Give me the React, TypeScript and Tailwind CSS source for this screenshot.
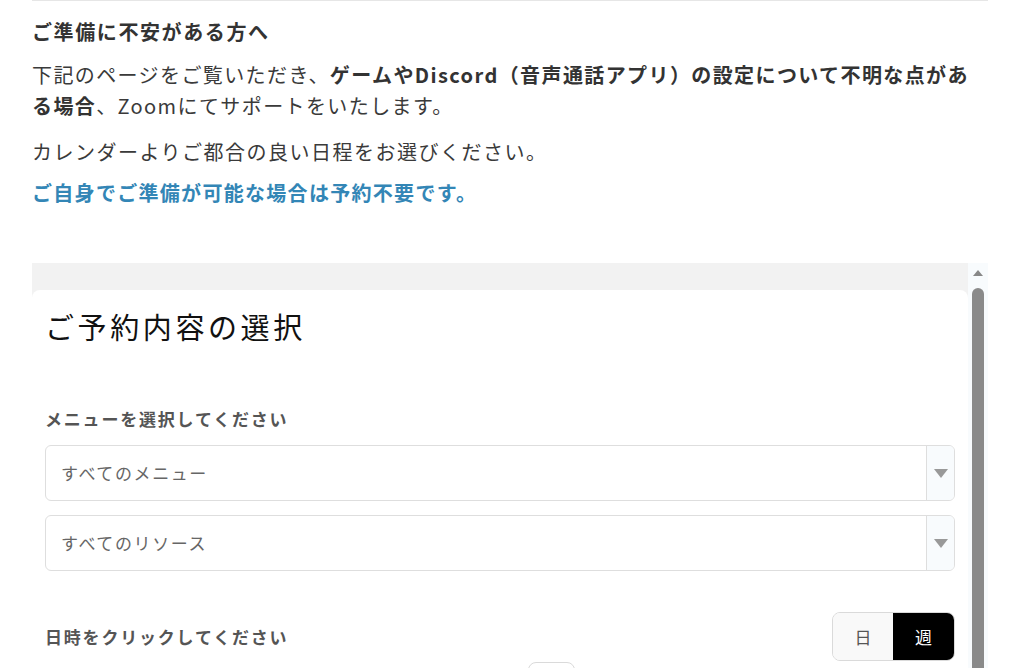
const font = { fontFamily: '"Noto Sans CJK JP", "Noto Sans", sans-serif' };

function SelectBox({ label }: { label: string }) {
  return (
    <div className="flex h-[56px] overflow-hidden rounded-md border border-[#dedede] bg-white">
      <div className="flex flex-1 items-center pl-[15px] text-[17px] tracking-[1.6px] text-[#666]">
        {label}
      </div>
      <div className="flex w-[28px] items-center justify-center border-l border-[#dedede] bg-[#f8fbfd]">
        <svg width="14" height="9" viewBox="0 0 14 9">
          <path d="M0 0 L14 0 L7 9 Z" fill="#999" />
        </svg>
      </div>
    </div>
  );
}

export default function App() {
  return (
    <div className="min-h-screen bg-white pl-[32px] pr-[36px] text-[#3a3a3a]" style={font}>
      <div className="border-t border-[#e6e6e6]">
        <h2 className="mt-[16px] text-[20px] font-bold leading-[30px] tracking-[1.6px] text-[#333]">
          ご準備に不安がある方へ
        </h2>
        <p className="mt-[12px] pr-[6px] text-[20px] leading-[31px] tracking-[1.4px]">
          下記のページをご覧いただき、
          <b className="text-[#333]">ゲームやDiscord（音声通話アプリ）の設定について不明な点がある場合</b>
          、Zoomにてサポートをいたします。
        </p>
        <p className="mt-[15px] text-[20px] leading-[31px] tracking-[1.5px]">
          カレンダーよりご都合の良い日程をお選びください。
        </p>
        <p className="mt-[10px] text-[20px] font-bold leading-[31px] tracking-[1.3px] text-[#3386b6]">
          ご自身でご準備が可能な場合は予約不要です。
        </p>
      </div>

      {/* scrolling booking frame */}
      <div className="mt-[55px] flex h-[420px]">
        <div className="flex-1 bg-[#f2f2f2] pt-[27px]">
          <div className="h-full rounded-t-lg bg-white px-[13px] pt-[16px]">
            <h1 className="text-[29px] leading-[40px] tracking-[3.6px] text-[#111]">
              ご予約内容の選択
            </h1>
            <div className="mt-[60px] text-[17px] font-bold leading-[26px] tracking-[1.8px] text-[#555]">
              メニューを選択してください
            </div>
            <div className="mt-[13px] flex flex-col gap-[14px]">
              <SelectBox label="すべてのメニュー" />
              <SelectBox label="すべてのリソース" />
            </div>
            <div className="mt-[41px] flex items-center justify-between">
              <div className="text-[17px] font-bold leading-[26px] tracking-[1.8px] text-[#555]">
                日時をクリックしてください
              </div>
              <div className="flex h-[49px] overflow-hidden rounded-lg border border-[#dadada]">
                <button className="w-[60px] bg-[#f9f9f9] text-[17px] text-[#555]">日</button>
                <button className="w-[61px] bg-black text-[17px] text-white">週</button>
              </div>
            </div>
            <div className="ml-[483px] mt-[1px] h-[30px] w-[47px] rounded-t-lg border border-[#dadada]" />
          </div>
        </div>
        <div className="flex w-[20px] flex-col items-center bg-[#f8fbfd]">
          <svg className="mt-[7px]" width="10" height="6" viewBox="0 0 10 6">
            <path d="M0 6 L5 0 L10 6 Z" fill="#888" />
          </svg>
          <div className="mt-[12px] w-[12px] flex-1 rounded-t-full bg-[#8a8a8a]" />
        </div>
      </div>
    </div>
  );
}
